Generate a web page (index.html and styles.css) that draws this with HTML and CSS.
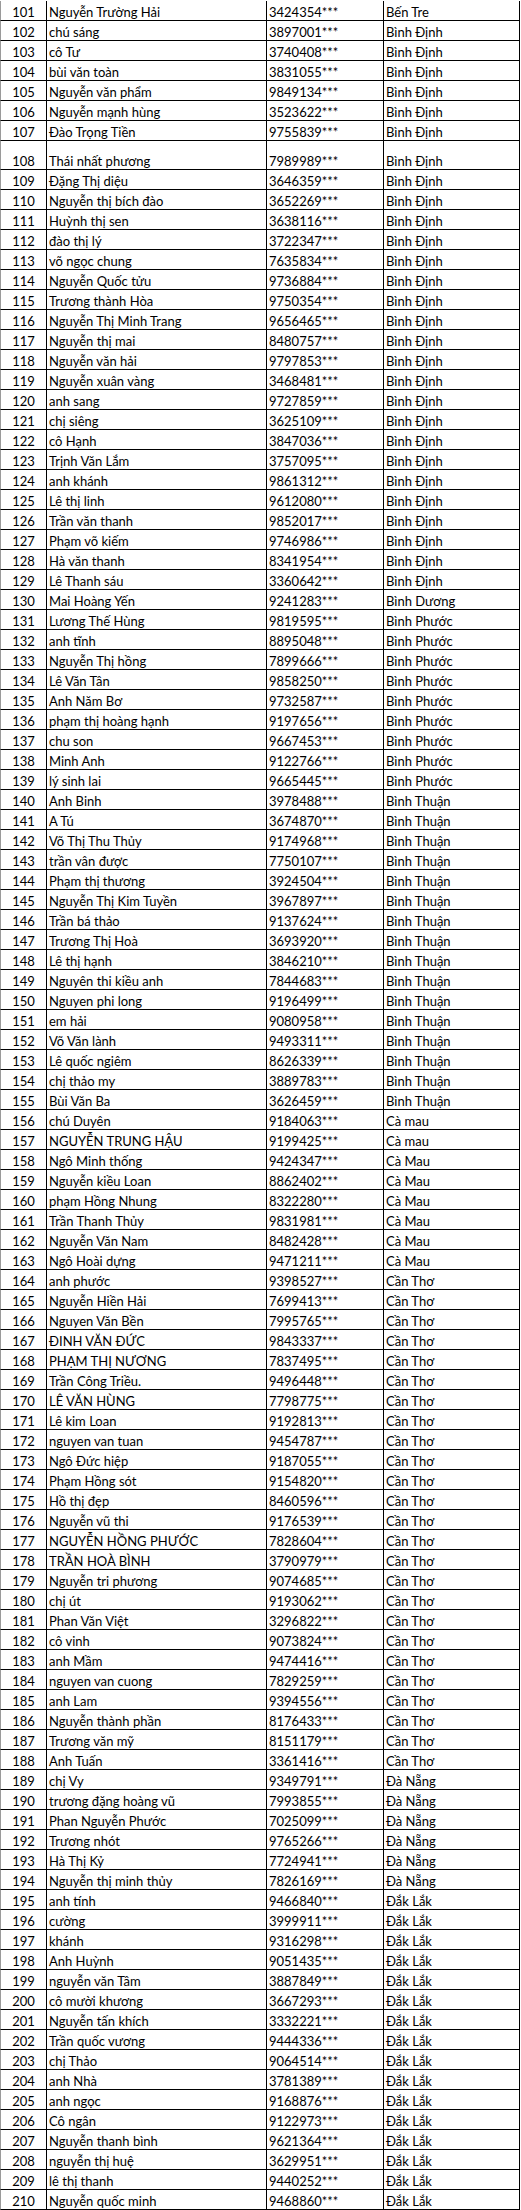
FILE: index.html
```html
<!DOCTYPE html>
<html lang="vi">
<head>
<meta charset="utf-8">
<title>Danh sách</title>
<link rel="stylesheet" href="styles.css">
</head>
<body>
<div class="sheet">
<div class="row"><div class="no">101</div><div class="name">Nguyễn Trường Hải</div><div class="id">3424354***</div><div class="prov">Bến Tre</div></div>
<div class="row"><div class="no">102</div><div class="name">chú sáng</div><div class="id">3897001***</div><div class="prov">Bình Định</div></div>
<div class="row"><div class="no">103</div><div class="name">cô Tư</div><div class="id">3740408***</div><div class="prov">Bình Định</div></div>
<div class="row"><div class="no">104</div><div class="name">bùi văn toàn</div><div class="id">3831055***</div><div class="prov">Bình Định</div></div>
<div class="row"><div class="no">105</div><div class="name">Nguyễn văn phẩm</div><div class="id">9849134***</div><div class="prov">Bình Định</div></div>
<div class="row"><div class="no">106</div><div class="name">Nguyễn mạnh hùng</div><div class="id">3523622***</div><div class="prov">Bình Định</div></div>
<div class="row"><div class="no">107</div><div class="name">Đào Trọng Tiền</div><div class="id">9755839***</div><div class="prov">Bình Định</div></div>
<div class="row tall"><div class="no">108</div><div class="name">Thái nhất phương</div><div class="id">7989989***</div><div class="prov">Bình Định</div></div>
<div class="row"><div class="no">109</div><div class="name">Đặng Thị diệu</div><div class="id">3646359***</div><div class="prov">Bình Định</div></div>
<div class="row"><div class="no">110</div><div class="name">Nguyễn thị bích đào</div><div class="id">3652269***</div><div class="prov">Bình Định</div></div>
<div class="row"><div class="no">111</div><div class="name">Huỳnh thị sen</div><div class="id">3638116***</div><div class="prov">Bình Định</div></div>
<div class="row"><div class="no">112</div><div class="name">đào thị lý</div><div class="id">3722347***</div><div class="prov">Bình Định</div></div>
<div class="row"><div class="no">113</div><div class="name">võ ngọc chung</div><div class="id">7635834***</div><div class="prov">Bình Định</div></div>
<div class="row"><div class="no">114</div><div class="name">Nguyễn Quốc tửu</div><div class="id">9736884***</div><div class="prov">Bình Định</div></div>
<div class="row"><div class="no">115</div><div class="name">Trương thành Hòa</div><div class="id">9750354***</div><div class="prov">Bình Định</div></div>
<div class="row"><div class="no">116</div><div class="name">Nguyễn Thị Minh Trang</div><div class="id">9656465***</div><div class="prov">Bình Định</div></div>
<div class="row"><div class="no">117</div><div class="name">Nguyễn thị mai</div><div class="id">8480757***</div><div class="prov">Bình Định</div></div>
<div class="row"><div class="no">118</div><div class="name">Nguyễn văn hải</div><div class="id">9797853***</div><div class="prov">Bình Định</div></div>
<div class="row"><div class="no">119</div><div class="name">Nguyễn xuân vàng</div><div class="id">3468481***</div><div class="prov">Bình Định</div></div>
<div class="row"><div class="no">120</div><div class="name">anh sang</div><div class="id">9727859***</div><div class="prov">Bình Định</div></div>
<div class="row"><div class="no">121</div><div class="name">chị siêng</div><div class="id">3625109***</div><div class="prov">Bình Định</div></div>
<div class="row"><div class="no">122</div><div class="name">cô Hạnh</div><div class="id">3847036***</div><div class="prov">Bình Định</div></div>
<div class="row"><div class="no">123</div><div class="name">Trịnh Văn Lắm</div><div class="id">3757095***</div><div class="prov">Bình Định</div></div>
<div class="row"><div class="no">124</div><div class="name">anh khánh</div><div class="id">9861312***</div><div class="prov">Bình Định</div></div>
<div class="row"><div class="no">125</div><div class="name">Lê thị linh</div><div class="id">9612080***</div><div class="prov">Bình Định</div></div>
<div class="row"><div class="no">126</div><div class="name">Trần văn thanh</div><div class="id">9852017***</div><div class="prov">Bình Định</div></div>
<div class="row"><div class="no">127</div><div class="name">Phạm võ kiếm</div><div class="id">9746986***</div><div class="prov">Bình Định</div></div>
<div class="row"><div class="no">128</div><div class="name">Hà văn thanh</div><div class="id">8341954***</div><div class="prov">Bình Định</div></div>
<div class="row"><div class="no">129</div><div class="name">Lê Thanh sáu</div><div class="id">3360642***</div><div class="prov">Bình Định</div></div>
<div class="row"><div class="no">130</div><div class="name">Mai Hoàng Yến</div><div class="id">9241283***</div><div class="prov">Bình Dương</div></div>
<div class="row"><div class="no">131</div><div class="name">Lương Thế Hùng</div><div class="id">9819595***</div><div class="prov">Bình Phước</div></div>
<div class="row"><div class="no">132</div><div class="name">anh tĩnh</div><div class="id">8895048***</div><div class="prov">Bình Phước</div></div>
<div class="row"><div class="no">133</div><div class="name">Nguyễn Thị hồng</div><div class="id">7899666***</div><div class="prov">Bình Phước</div></div>
<div class="row"><div class="no">134</div><div class="name">Lê Văn Tân</div><div class="id">9858250***</div><div class="prov">Bình Phước</div></div>
<div class="row"><div class="no">135</div><div class="name">Anh Năm Bơ</div><div class="id">9732587***</div><div class="prov">Bình Phước</div></div>
<div class="row"><div class="no">136</div><div class="name">phạm thị hoàng hạnh</div><div class="id">9197656***</div><div class="prov">Bình Phước</div></div>
<div class="row"><div class="no">137</div><div class="name">chu son</div><div class="id">9667453***</div><div class="prov">Bình Phước</div></div>
<div class="row"><div class="no">138</div><div class="name">Minh Anh</div><div class="id">9122766***</div><div class="prov">Bình Phước</div></div>
<div class="row"><div class="no">139</div><div class="name">lý sinh lai</div><div class="id">9665445***</div><div class="prov">Bình Phước</div></div>
<div class="row"><div class="no">140</div><div class="name">Anh Binh</div><div class="id">3978488***</div><div class="prov">Bình Thuận</div></div>
<div class="row"><div class="no">141</div><div class="name">A Tú</div><div class="id">3674870***</div><div class="prov">Bình Thuận</div></div>
<div class="row"><div class="no">142</div><div class="name">Võ Thị Thu Thủy</div><div class="id">9174968***</div><div class="prov">Bình Thuận</div></div>
<div class="row"><div class="no">143</div><div class="name">trần vân được</div><div class="id">7750107***</div><div class="prov">Bình Thuận</div></div>
<div class="row"><div class="no">144</div><div class="name">Phạm thị thương</div><div class="id">3924504***</div><div class="prov">Bình Thuận</div></div>
<div class="row"><div class="no">145</div><div class="name">Nguyễn Thị Kim Tuyền</div><div class="id">3967897***</div><div class="prov">Bình Thuận</div></div>
<div class="row"><div class="no">146</div><div class="name">Trần bá thảo</div><div class="id">9137624***</div><div class="prov">Bình Thuận</div></div>
<div class="row"><div class="no">147</div><div class="name">Trương Thị Hoà</div><div class="id">3693920***</div><div class="prov">Bình Thuận</div></div>
<div class="row"><div class="no">148</div><div class="name">Lê thị hạnh</div><div class="id">3846210***</div><div class="prov">Bình Thuận</div></div>
<div class="row"><div class="no">149</div><div class="name">Nguyên thi kiều anh</div><div class="id">7844683***</div><div class="prov">Bình Thuận</div></div>
<div class="row"><div class="no">150</div><div class="name">Nguyen phi long</div><div class="id">9196499***</div><div class="prov">Bình Thuận</div></div>
<div class="row"><div class="no">151</div><div class="name">em hải</div><div class="id">9080958***</div><div class="prov">Bình Thuận</div></div>
<div class="row"><div class="no">152</div><div class="name">Võ Văn lành</div><div class="id">9493311***</div><div class="prov">Bình Thuận</div></div>
<div class="row"><div class="no">153</div><div class="name">Lê quốc ngiêm</div><div class="id">8626339***</div><div class="prov">Bình Thuận</div></div>
<div class="row"><div class="no">154</div><div class="name">chị thảo my</div><div class="id">3889783***</div><div class="prov">Bình Thuận</div></div>
<div class="row"><div class="no">155</div><div class="name">Bùi Văn Ba</div><div class="id">3626459***</div><div class="prov">Bình Thuận</div></div>
<div class="row"><div class="no">156</div><div class="name">chú Duyên</div><div class="id">9184063***</div><div class="prov">Cà mau</div></div>
<div class="row"><div class="no">157</div><div class="name">NGUYỄN TRUNG HẬU</div><div class="id">9199425***</div><div class="prov">Cà mau</div></div>
<div class="row"><div class="no">158</div><div class="name">Ngô Minh thống</div><div class="id">9424347***</div><div class="prov">Cà Mau</div></div>
<div class="row"><div class="no">159</div><div class="name">Nguyễn kiều Loan</div><div class="id">8862402***</div><div class="prov">Cà Mau</div></div>
<div class="row"><div class="no">160</div><div class="name">phạm Hồng Nhung</div><div class="id">8322280***</div><div class="prov">Cà Mau</div></div>
<div class="row"><div class="no">161</div><div class="name">Trần Thanh Thủy</div><div class="id">9831981***</div><div class="prov">Cà Mau</div></div>
<div class="row"><div class="no">162</div><div class="name">Nguyễn Văn Nam</div><div class="id">8482428***</div><div class="prov">Cà Mau</div></div>
<div class="row"><div class="no">163</div><div class="name">Ngô Hoài dựng</div><div class="id">9471211***</div><div class="prov">Cà Mau</div></div>
<div class="row"><div class="no">164</div><div class="name">anh phước</div><div class="id">9398527***</div><div class="prov">Cần Thơ</div></div>
<div class="row"><div class="no">165</div><div class="name">Nguyễn Hiền Hải</div><div class="id">7699413***</div><div class="prov">Cần Thơ</div></div>
<div class="row"><div class="no">166</div><div class="name">Nguyen Văn Bền</div><div class="id">7995765***</div><div class="prov">Cần Thơ</div></div>
<div class="row"><div class="no">167</div><div class="name">ĐINH VĂN ĐỨC</div><div class="id">9843337***</div><div class="prov">Cần Thơ</div></div>
<div class="row"><div class="no">168</div><div class="name">PHẠM THỊ NƯƠNG</div><div class="id">7837495***</div><div class="prov">Cần Thơ</div></div>
<div class="row"><div class="no">169</div><div class="name">Trần Công Triều.</div><div class="id">9496448***</div><div class="prov">Cần Thơ</div></div>
<div class="row"><div class="no">170</div><div class="name">LÊ VĂN HÙNG</div><div class="id">7798775***</div><div class="prov">Cần Thơ</div></div>
<div class="row"><div class="no">171</div><div class="name">Lê kim Loan</div><div class="id">9192813***</div><div class="prov">Cần Thơ</div></div>
<div class="row"><div class="no">172</div><div class="name">nguyen van tuan</div><div class="id">9454787***</div><div class="prov">Cần Thơ</div></div>
<div class="row"><div class="no">173</div><div class="name">Ngô Đức hiệp</div><div class="id">9187055***</div><div class="prov">Cần Thơ</div></div>
<div class="row"><div class="no">174</div><div class="name">Phạm Hồng sót</div><div class="id">9154820***</div><div class="prov">Cần Thơ</div></div>
<div class="row"><div class="no">175</div><div class="name">Hồ thị đẹp</div><div class="id">8460596***</div><div class="prov">Cần Thơ</div></div>
<div class="row"><div class="no">176</div><div class="name">Nguyễn vũ thi</div><div class="id">9176539***</div><div class="prov">Cần Thơ</div></div>
<div class="row"><div class="no">177</div><div class="name">NGUYỄN HỒNG PHƯỚC</div><div class="id">7828604***</div><div class="prov">Cần Thơ</div></div>
<div class="row"><div class="no">178</div><div class="name">TRẦN HOÀ BÌNH</div><div class="id">3790979***</div><div class="prov">Cần Thơ</div></div>
<div class="row"><div class="no">179</div><div class="name">Nguyễn tri phương</div><div class="id">9074685***</div><div class="prov">Cần Thơ</div></div>
<div class="row"><div class="no">180</div><div class="name">chị út</div><div class="id">9193062***</div><div class="prov">Cần Thơ</div></div>
<div class="row"><div class="no">181</div><div class="name">Phan Văn Việt</div><div class="id">3296822***</div><div class="prov">Cần Thơ</div></div>
<div class="row"><div class="no">182</div><div class="name">cô vinh</div><div class="id">9073824***</div><div class="prov">Cần Thơ</div></div>
<div class="row"><div class="no">183</div><div class="name">anh Mầm</div><div class="id">9474416***</div><div class="prov">Cần Thơ</div></div>
<div class="row"><div class="no">184</div><div class="name">nguyen van cuong</div><div class="id">7829259***</div><div class="prov">Cần Thơ</div></div>
<div class="row"><div class="no">185</div><div class="name">anh Lam</div><div class="id">9394556***</div><div class="prov">Cần Thơ</div></div>
<div class="row"><div class="no">186</div><div class="name">Nguyễn thành phần</div><div class="id">8176433***</div><div class="prov">Cần Thơ</div></div>
<div class="row"><div class="no">187</div><div class="name">Trương văn mỹ</div><div class="id">8151179***</div><div class="prov">Cần Thơ</div></div>
<div class="row"><div class="no">188</div><div class="name">Anh Tuấn</div><div class="id">3361416***</div><div class="prov">Cần Thơ</div></div>
<div class="row"><div class="no">189</div><div class="name">chị Vy</div><div class="id">9349791***</div><div class="prov">Đà Nẵng</div></div>
<div class="row"><div class="no">190</div><div class="name">trương đặng hoàng vũ</div><div class="id">7993855***</div><div class="prov">Đà Nẵng</div></div>
<div class="row"><div class="no">191</div><div class="name">Phan Nguyễn Phước</div><div class="id">7025099***</div><div class="prov">Đà Nẵng</div></div>
<div class="row"><div class="no">192</div><div class="name">Trương nhót</div><div class="id">9765266***</div><div class="prov">Đà Nẵng</div></div>
<div class="row"><div class="no">193</div><div class="name">Hà Thị Kỷ</div><div class="id">7724941***</div><div class="prov">Đà Nẵng</div></div>
<div class="row"><div class="no">194</div><div class="name">Nguyễn thị minh thủy</div><div class="id">7826169***</div><div class="prov">Đà Nẵng</div></div>
<div class="row"><div class="no">195</div><div class="name">anh tính</div><div class="id">9466840***</div><div class="prov">Đắk Lắk</div></div>
<div class="row"><div class="no">196</div><div class="name">cường</div><div class="id">3999911***</div><div class="prov">Đắk Lắk</div></div>
<div class="row"><div class="no">197</div><div class="name">khánh</div><div class="id">9316298***</div><div class="prov">Đắk Lắk</div></div>
<div class="row"><div class="no">198</div><div class="name">Anh Huỳnh</div><div class="id">9051435***</div><div class="prov">Đắk Lắk</div></div>
<div class="row"><div class="no">199</div><div class="name">nguyễn văn Tâm</div><div class="id">3887849***</div><div class="prov">Đắk Lắk</div></div>
<div class="row"><div class="no">200</div><div class="name">cô mười khương</div><div class="id">3667293***</div><div class="prov">Đắk Lắk</div></div>
<div class="row"><div class="no">201</div><div class="name">Nguyễn tấn khích</div><div class="id">3332221***</div><div class="prov">Đắk Lắk</div></div>
<div class="row"><div class="no">202</div><div class="name">Trần quốc vương</div><div class="id">9444336***</div><div class="prov">Đắk Lắk</div></div>
<div class="row"><div class="no">203</div><div class="name">chị Thảo</div><div class="id">9064514***</div><div class="prov">Đắk Lắk</div></div>
<div class="row"><div class="no">204</div><div class="name">anh Nhà</div><div class="id">3781389***</div><div class="prov">Đắk Lắk</div></div>
<div class="row"><div class="no">205</div><div class="name">anh ngọc</div><div class="id">9168876***</div><div class="prov">Đắk Lắk</div></div>
<div class="row"><div class="no">206</div><div class="name">Cô ngân</div><div class="id">9122973***</div><div class="prov">Đắk Lắk</div></div>
<div class="row"><div class="no">207</div><div class="name">Nguyễn thanh bình</div><div class="id">9621364***</div><div class="prov">Đắk Lắk</div></div>
<div class="row"><div class="no">208</div><div class="name">nguyễn thị huệ</div><div class="id">3629951***</div><div class="prov">Đắk Lắk</div></div>
<div class="row"><div class="no">209</div><div class="name">lê thị thanh</div><div class="id">9440252***</div><div class="prov">Đắk Lắk</div></div>
<div class="row"><div class="no">210</div><div class="name">Nguyễn quốc minh</div><div class="id">9468860***</div><div class="prov">Đắk Lắk</div></div>
</div>
</body>
</html>
```
FILE: styles.css
```css
html, body {
  margin: 0;
  padding: 0;
  background: #ffffff;
}

.sheet {
  padding-top: 1px;
  width: 520px;
  font-family: Lato, "Noto Sans", sans-serif;
  font-size: 13px;
  color: #000000;
}

.row {
  display: grid;
  grid-template-columns: 47px 220px 117px 136px;
  height: 20px;
}

.row.tall {
  height: 29px;
}

.row > div {
  box-sizing: border-box;
  border-right: 1px solid #000000;
  border-bottom: 1px solid #000000;
  display: flex;
  align-items: flex-end;
  line-height: 16px;
  padding: 0 0 0 2px;
  white-space: nowrap;
  overflow: hidden;
}

.row > .no {
  border-left: 1px solid #9a9a9a;
  justify-content: center;
  padding: 0;
}
```
